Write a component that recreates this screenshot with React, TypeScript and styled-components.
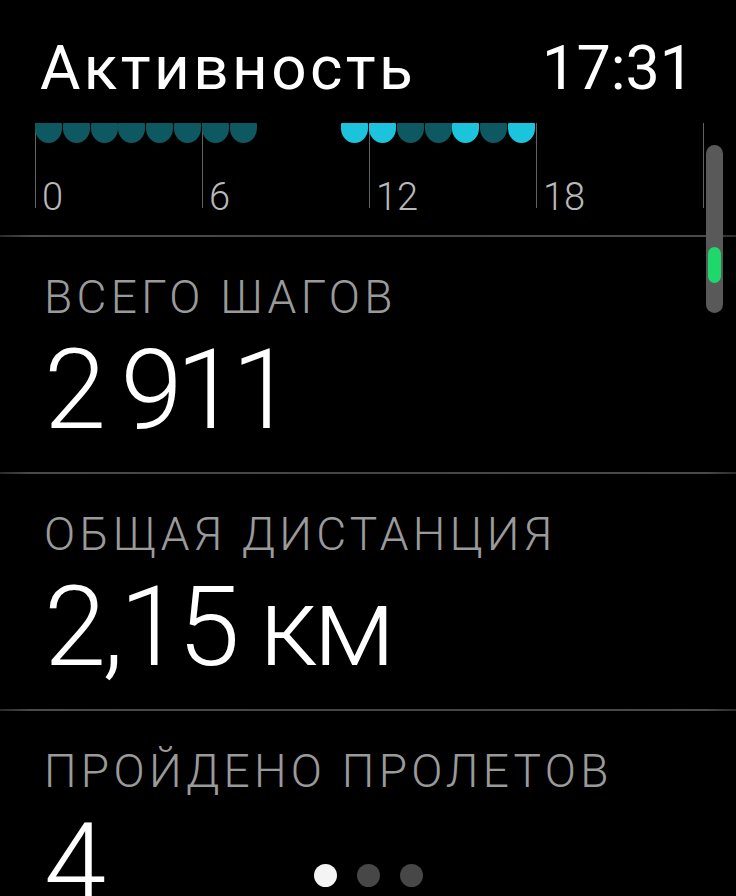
import React from "react";
import styled, { createGlobalStyle } from "styled-components";

const GlobalStyle = createGlobalStyle`
  html, body { margin: 0; padding: 0; background: #000; }
  body { font-family: Roboto, "Noto Sans", sans-serif; color: #fff; }
`;

const Screen = styled.div`
  position: relative;
  width: 736px;
  height: 896px;
  overflow: hidden;
  background: #000;
`;

const Header = styled.header`
  display: flex;
  justify-content: space-between;
  align-items: baseline;
  padding: 37px 42px 0 40px;
  height: 86px;
`;

const Title = styled.h1`
  margin: 0;
  font-size: 62px;
  line-height: 1;
  font-weight: 400;
  letter-spacing: 3.4px;
  color: #fff;
`;

const Clock = styled.span`
  font-size: 61px;
  line-height: 1;
  font-weight: 400;
  color: #fff;
`;

const Chart = styled.div`
  display: flex;
  margin-left: 35px;
  width: 670px;
  height: 112px;
`;

const HourCell = styled.div<{ $tick: boolean }>`
  position: relative;
  flex: 0 0 27.83px;
  height: 85px;
  box-sizing: border-box;
  border-left: 1px solid ${(p) => (p.$tick ? "#626262" : "transparent")};
`;

const EndLine = styled.div`
  flex: 0 0 1px;
  height: 85px;
  background: #626262;
`;

const Dot = styled.div<{ $bright: boolean }>`
  width: 27px;
  height: 20px;
  margin-left: -1px;
  background: ${(p) => (p.$bright ? "#1bc3dc" : "#0e5861")};
  border-radius: 1px 1px 14px 14px / 1px 1px 15px 15px;
`;

const TickLabel = styled.span`
  position: absolute;
  left: 6px;
  top: 55px;
  font-size: 38px;
  line-height: 1;
  font-weight: 300;
  color: #b8b8b8;
  white-space: nowrap;
`;

const Separator = styled.div`
  height: 2px;
  background: linear-gradient(90deg, #2a2a2a 0%, #4a4a4a 4%, #454545 50%, #4a4a4a 96%, #2a2a2a 100%);
`;

const Section = styled.section`
  height: 235px;
  padding-left: 44px;
  box-sizing: border-box;
  display: flex;
  flex-direction: column;
`;

const Label = styled.div`
  margin-top: 37px;
  font-size: 46px;
  line-height: 1;
  font-weight: 300;
  letter-spacing: 4.3px;
  color: #9a9a9a;
  white-space: nowrap;
`;

const Value = styled.div<{ $spacing: number }>`
  margin-top: 14px;
  font-size: 112px;
  line-height: 1;
  font-weight: 300;
  letter-spacing: ${(p) => p.$spacing}px;
  color: #fff;
  white-space: nowrap;
`;

const ScrollTrack = styled.div`
  position: absolute;
  left: 706px;
  top: 145px;
  width: 17px;
  height: 168px;
  border-radius: 9px;
  background: #595959;
`;

const ScrollThumb = styled.div`
  position: absolute;
  left: 2px;
  top: 102px;
  width: 13px;
  height: 36px;
  border-radius: 7px;
  background: #1ed86c;
`;

const PageDots = styled.div`
  position: absolute;
  left: 0;
  right: 0;
  top: 864px;
  display: flex;
  justify-content: center;
  gap: 20px;
`;

const PageDot = styled.span<{ $active: boolean }>`
  width: 23px;
  height: 23px;
  border-radius: 50%;
  background: ${(p) => (p.$active ? "#f4f4f4" : "#474747")};
`;

const hours: (null | "d" | "b")[] = [
  "d", "d", "d", "d", "d", "d", "d", "d",
  null, null, null,
  "b", "b", "d", "d", "b", "d", "b",
  null, null, null, null, null, null,
];

const stats = [
  { label: "ВСЕГО ШАГОВ", value: "2 911", spacing: -6.5 },
  { label: "ОБЩАЯ ДИСТАНЦИЯ", value: "2,15 км", spacing: -4 },
  { label: "ПРОЙДЕНО ПРОЛЕТОВ", value: "4", spacing: -4 },
];

export default function App() {
  return (
    <Screen>
      <GlobalStyle />
      <Header>
        <Title>Активность</Title>
        <Clock>17:31</Clock>
      </Header>
      <Chart>
        {hours.map((h, i) => (
          <HourCell key={i} $tick={i % 6 === 0}>
            {h && <Dot $bright={h === "b"} />}
            {i % 6 === 0 && <TickLabel>{i}</TickLabel>}
          </HourCell>
        ))}
        <EndLine />
      </Chart>
      {stats.map((s) => (
        <React.Fragment key={s.label}>
          <Separator />
          <Section>
            <Label>{s.label}</Label>
            <Value $spacing={s.spacing}>{s.value}</Value>
          </Section>
        </React.Fragment>
      ))}
      <ScrollTrack>
        <ScrollThumb />
      </ScrollTrack>
      <PageDots>
        <PageDot $active />
        <PageDot $active={false} />
        <PageDot $active={false} />
      </PageDots>
    </Screen>
  );
}
